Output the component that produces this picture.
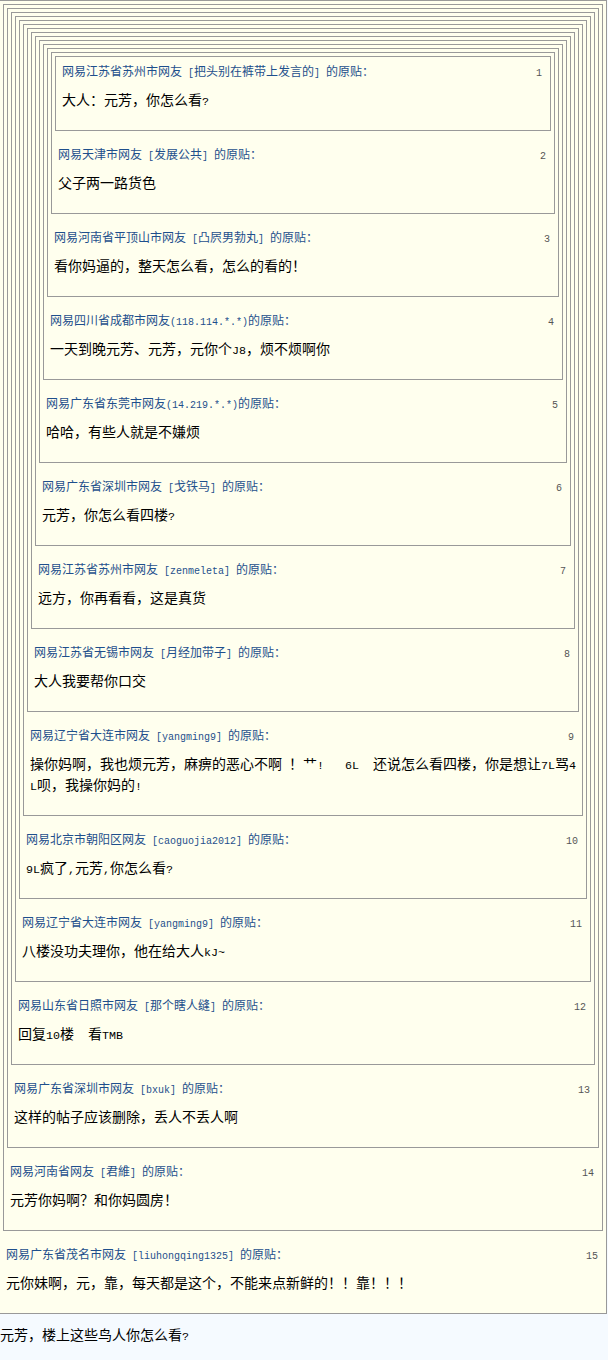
import React from 'react';

const posts = [
  { from: '网易江苏省苏州市网友 [把头别在裤带上发言的] 的原贴：', text: '大人：元芳，你怎么看?' },
  { from: '网易天津市网友 [发展公共] 的原贴：', text: '父子两一路货色' },
  { from: '网易河南省平顶山市网友 [凸屄男勃丸] 的原贴：', text: '看你妈逼的，整天怎么看，怎么的看的！' },
  { from: '网易四川省成都市网友(118.114.*.*)的原贴：', text: '一天到晚元芳、元芳，元你个J8，烦不烦啊你' },
  { from: '网易广东省东莞市网友(14.219.*.*)的原贴：', text: '哈哈，有些人就是不嫌烦' },
  { from: '网易广东省深圳市网友 [戈铁马] 的原贴：', text: '元芳，你怎么看四楼?' },
  { from: '网易江苏省苏州市网友 [zenmeleta] 的原贴：', text: '远方，你再看看，这是真货' },
  { from: '网易江苏省无锡市网友 [月经加带子] 的原贴：', text: '大人我要帮你口交' },
  {
    from: '网易辽宁省大连市网友 [yangming9] 的原贴：',
    text: '操你妈啊，我也烦元芳，麻痹的恶心不啊 ！艹!   6L  还说怎么看四楼，你是想让7L骂4L呗，我操你妈的!',
  },
  { from: '网易北京市朝阳区网友 [caoguojia2012] 的原贴：', text: '9L疯了,元芳,你怎么看?' },
  { from: '网易辽宁省大连市网友 [yangming9] 的原贴：', text: '八楼没功夫理你，他在给大人kJ~' },
  { from: '网易山东省日照市网友 [那个瞎人缝] 的原贴：', text: '回复10楼  看TMB' },
  { from: '网易广东省深圳市网友 [bxuk] 的原贴：', text: '这样的帖子应该删除，丢人不丢人啊' },
  { from: '网易河南省网友 [君維] 的原贴：', text: '元芳你妈啊？和你妈圆房！' },
  { from: '网易广东省茂名市网友 [liuhongqing1325] 的原贴：', text: '元你妹啊，元，靠，每天都是这个，不能来点新鲜的！！靠！！！' },
];

// ascii runs get the narrow mono face, like the old bitmap song font
const Mixed = ({ text, mono }) =>
  text.split(/([\x20-\x7e]+)/).map((part, i) =>
    /^[\x20-\x7e]+$/.test(part) ? (
      <span key={i} className={mono}>
        {part}
      </span>
    ) : (
      part
    )
  );

const headMono = "font-['Liberation_Mono',monospace] text-[10px] leading-none";
const bodyMono = "font-['Liberation_Mono',monospace] text-[11.66px] leading-none";

function Quote({ index }) {
  const post = posts[index];
  return (
    <div className="border border-[#999] bg-[#ffffee] px-[3px] pt-[3px] pb-[20px]">
      {index > 0 && <Quote index={index - 1} />}
      <div
        className={`${index > 0 ? 'mt-[14px]' : 'mt-[2px]'} flex items-baseline justify-between pl-[3px] pr-[5px] text-[12px] leading-[18px] text-[#1e4f8c]`}
      >
        <span>
          <Mixed text={post.from} mono={headMono} />
        </span>
        <span className={`${headMono} text-[#555]`}>{index + 1}</span>
      </div>
      <p className="mt-[9px] px-[3px] text-[14px] leading-[21px] text-black whitespace-pre-wrap break-all">
        <Mixed text={post.text} mono={bodyMono} />
      </p>
    </div>
  );
}

export default function App() {
  return (
    <div className="w-[608px] h-[1360px] overflow-hidden bg-[#f5faff] font-['Noto_Sans_CJK_SC',sans-serif]">
      <div className="-ml-px w-[608px]">
        <Quote index={posts.length - 1} />
      </div>
      <p className="pt-[10px] text-[14px] leading-[21px] text-black">
        <Mixed text="元芳，楼上这些鸟人你怎么看?" mono={bodyMono} />
      </p>
    </div>
  );
}
